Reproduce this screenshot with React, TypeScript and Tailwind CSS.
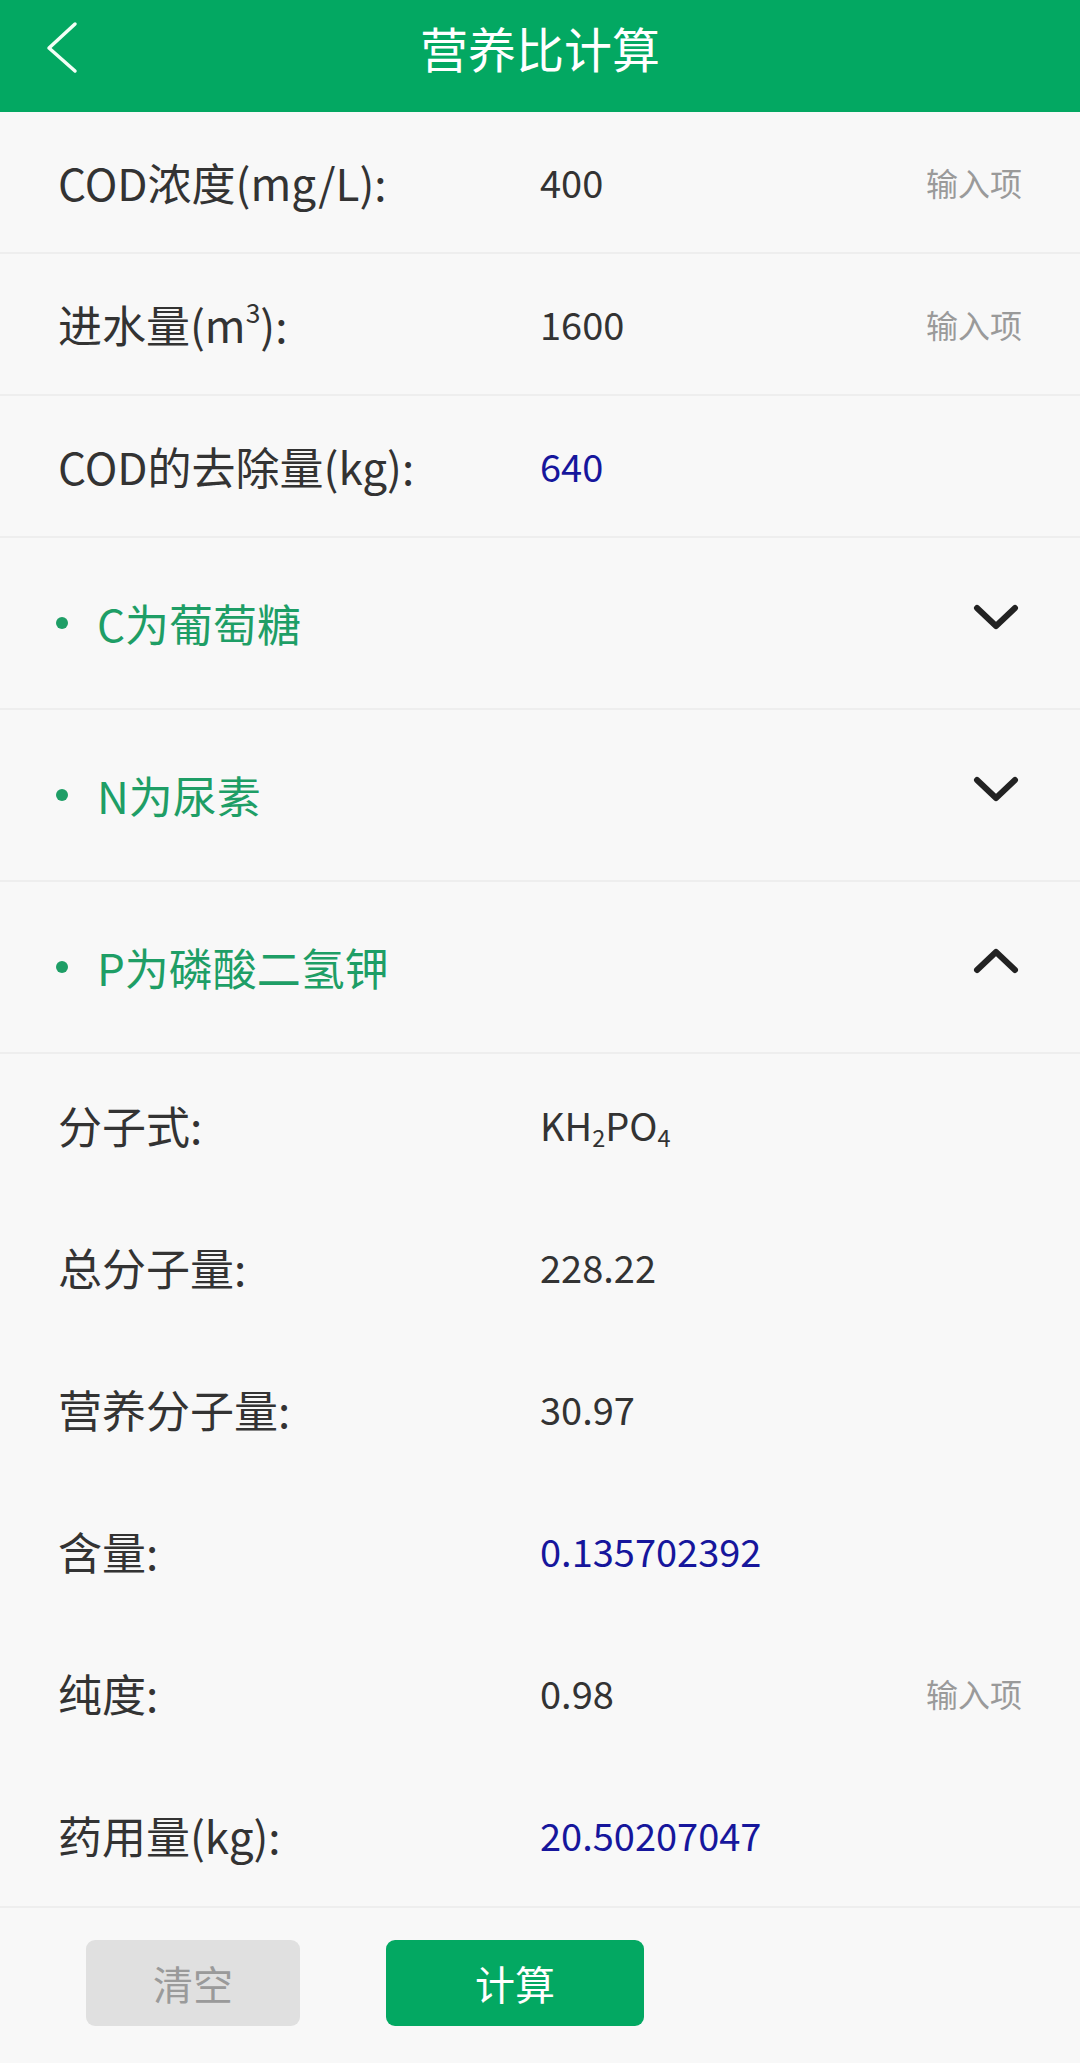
import React from "react";

const FONT = "font-['Noto_Sans_CJK_SC','Noto_Sans',sans-serif]";

function InputRow({ label, value, hint, blue }: { label: React.ReactNode; value: React.ReactNode; hint?: string; blue?: boolean }) {
  return (
    <div className="h-[142px] flex items-center pl-[58px] pr-[58px] border-b-2 border-[#eeeeee]">
      <div className="w-[482px] text-[44px] text-[#333333] leading-none">{label}</div>
      <div className={`flex-1 text-[38px] leading-none ${blue ? "text-[#16169c]" : "text-[#333333]"}`}>{value}</div>
      {hint ? <div className="text-[32px] text-[#9a9a9a] leading-none">{hint}</div> : null}
    </div>
  );
}

function DetailRow({ label, value, hint, blue }: { label: React.ReactNode; value: React.ReactNode; hint?: string; blue?: boolean }) {
  return (
    <div className="h-[142px] flex items-center pl-[58px] pr-[58px]">
      <div className="w-[482px] text-[44px] text-[#333333] leading-none">{label}</div>
      <div className={`flex-1 text-[38px] leading-none ${blue ? "text-[#16169c]" : "text-[#333333]"}`}>{value}</div>
      {hint ? <div className="text-[32px] text-[#9a9a9a] leading-none">{hint}</div> : null}
    </div>
  );
}

function Chevron({ up }: { up?: boolean }) {
  return (
    <svg width="52" height="34" viewBox="0 0 52 34" className="mb-[12px]">
      <polyline
        points={up ? "7,26 26,8 45,26" : "7,8 26,26 45,8"}
        fill="none"
        stroke="#222222"
        strokeWidth="6"
        strokeLinecap="round"
        strokeLinejoin="round"
      />
    </svg>
  );
}

function AccordionHeader({ title, up }: { title: string; up?: boolean }) {
  return (
    <div className="h-[172px] flex items-center pl-[56px] pr-[58px] border-b-2 border-[#eeeeee]">
      <div className="w-[12px] h-[12px] rounded-full bg-[#1e9e66]" />
      <div className="ml-[29px] flex-1 text-[44px] text-[#1e9e66] leading-none">{title}</div>
      <Chevron up={up} />
    </div>
  );
}

export default function App() {
  return (
    <div className={`w-[1080px] h-[2063px] bg-[#f8f8f8] flex flex-col ${FONT}`}>
      <div className="relative h-[112px] bg-[#03a862] shrink-0">
        <div className="h-[94px] flex items-center justify-center">
          <span className="text-[48px] text-white leading-none">营养比计算</span>
        </div>
        <svg width="48" height="64" viewBox="0 0 48 64" className="absolute left-[40px] top-[16px]">
          <polyline points="35,8 9,32 35,55" fill="none" stroke="#f2fff6" strokeWidth="3.5" strokeLinecap="round" strokeLinejoin="round" />
        </svg>
      </div>

      <InputRow label="COD浓度(mg/L):" value="400" hint="输入项" />
      <InputRow
        label={
          <span>
            进水量(m<sup className="text-[0.6em] -top-[0.75em]">3</sup>):
          </span>
        }
        value="1600"
        hint="输入项"
      />
      <InputRow label="COD的去除量(kg):" value="640" blue />

      <AccordionHeader title="C为葡萄糖" />
      <AccordionHeader title="N为尿素" />
      <AccordionHeader title="P为磷酸二氢钾" up />

      <div className="flex flex-col">
        <DetailRow
          label="分子式:"
          value={
            <span>
              KH<sub className="text-[0.62em]">2</sub>PO<sub className="text-[0.62em]">4</sub>
            </span>
          }
        />
        <DetailRow label="总分子量:" value="228.22" />
        <DetailRow label="营养分子量:" value="30.97" />
        <DetailRow label="含量:" value="0.135702392" blue />
        <DetailRow label="纯度:" value="0.98" hint="输入项" />
        <DetailRow label="药用量(kg):" value="20.50207047" blue />
      </div>

      <div className="flex-1 border-t-2 border-[#eeeeee] pt-[32px] pl-[86px] flex items-start gap-[86px]">
        <div className="w-[214px] h-[86px] rounded-[9px] bg-[#e0e0e0] flex items-center justify-center text-[40px] text-[#9a9a9a] leading-none">
          清空
        </div>
        <div className="w-[258px] h-[86px] rounded-[9px] bg-[#03a862] flex items-center justify-center text-[40px] text-white leading-none">
          计算
        </div>
      </div>
    </div>
  );
}
